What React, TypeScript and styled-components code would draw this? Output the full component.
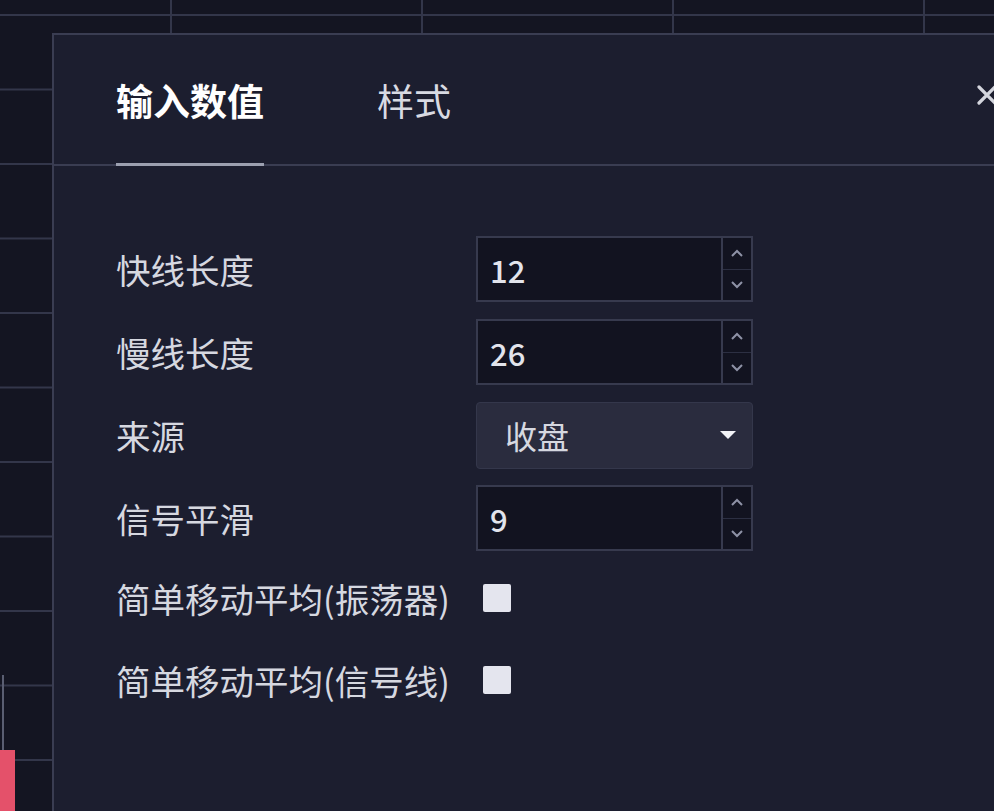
import React, { useState } from 'react';
import styled, { createGlobalStyle } from 'styled-components';

const GlobalStyle = createGlobalStyle`
  html, body {
    margin: 0;
    padding: 0;
    background: #141522;
  }
  * {
    box-sizing: border-box;
  }
`;

const FONT = `"Noto Sans CJK SC", "Noto Sans", sans-serif`;

function App() {
  const [activeTab, setActiveTab] = useState(0);
  const [oscSma, setOscSma] = useState(false);
  const [sigSma, setSigSma] = useState(false);

  return (
    <Page>
      <GlobalStyle />
      <CandleWick />
      <Candle />
      <Panel>
        <Header>
          <Tab active={activeTab === 0} onClick={() => setActiveTab(0)}>
            输入数值
          </Tab>
          <Tab active={activeTab === 1} onClick={() => setActiveTab(1)}>
            样式
          </Tab>
          <CloseButton aria-label="close">
            <svg width="26" height="26" viewBox="0 0 26 26">
              <path d="M5 5 L21 21 M21 5 L5 21" stroke="#d4d6de" strokeWidth="3.2" strokeLinecap="round" />
            </svg>
          </CloseButton>
        </Header>
        <Body>
          <FormGrid>
            <Label>快线长度</Label>
            <NumberField value="12" />
            <Label>慢线长度</Label>
            <NumberField value="26" />
            <Label>来源</Label>
            <Select>
              <span>收盘</span>
              <Caret />
            </Select>
            <Label>信号平滑</Label>
            <NumberField value="9" />
          </FormGrid>
          <CheckRow>
            <Label>简单移动平均(振荡器)</Label>
            <CheckBox checked={oscSma} onClick={() => setOscSma(!oscSma)} />
          </CheckRow>
          <CheckRow>
            <Label>简单移动平均(信号线)</Label>
            <CheckBox checked={sigSma} onClick={() => setSigSma(!sigSma)} />
          </CheckRow>
        </Body>
      </Panel>
    </Page>
  );
}

function NumberField({ value }: { value: string }) {
  return (
    <InputBox>
      <InputText>{value}</InputText>
      <Spinner>
        <SpinHalf>
          <svg width="14" height="9" viewBox="0 0 14 9">
            <path d="M2 7 L7 2 L12 7" stroke="#8e92a6" strokeWidth="2" fill="none" />
          </svg>
        </SpinHalf>
        <SpinHalf divider>
          <svg width="14" height="9" viewBox="0 0 14 9">
            <path d="M2 2 L7 7 L12 2" stroke="#8e92a6" strokeWidth="2" fill="none" />
          </svg>
        </SpinHalf>
      </Spinner>
    </InputBox>
  );
}

const Page = styled.div`
  position: relative;
  width: 994px;
  height: 811px;
  overflow: hidden;
  padding: 33px 0 0 52px;
  display: flex;
  background-color: #141522;
  background-image:
    linear-gradient(to bottom, #33364a 0, #33364a 2px, transparent 2px),
    linear-gradient(to right, #33364a 0, #33364a 2px, transparent 2px);
  background-size: 100% 74.5px, 251px 100%;
  background-position: 0 14px, 170px 0;
`;

const Candle = styled.div`
  position: absolute;
  left: 0;
  top: 750px;
  width: 15px;
  height: 61px;
  background: #e4516a;
`;

const CandleWick = styled.div`
  position: absolute;
  left: 2px;
  top: 675px;
  width: 2px;
  height: 76px;
  background: #5a5e72;
`;

const Panel = styled.div`
  flex: 0 0 962px;
  height: 800px;
  background: #1c1e2f;
  border-top: 2px solid #3a3d52;
  border-left: 2px solid #3a3d52;
  display: flex;
  flex-direction: column;
  font-family: ${FONT};
`;

const Header = styled.div`
  height: 131px;
  display: flex;
  align-items: stretch;
  padding-left: 62px;
  gap: 113px;
  border-bottom: 2px solid #3a3d52;
`;

const Tab = styled.div<{ active: boolean }>`
  display: flex;
  align-items: center;
  padding-top: 2px;
  font-size: 37px;
  font-weight: ${({ active }) => (active ? 700 : 400)};
  color: ${({ active }) => (active ? '#ffffff' : '#d8dae2')};
  border-bottom: 3px solid ${({ active }) => (active ? '#9ca0b0' : 'transparent')};
  margin-bottom: -2px;
  cursor: pointer;
`;

const CloseButton = styled.div`
  margin-left: auto;
  margin-right: 14px;
  display: flex;
  align-items: center;
  padding-bottom: 10px;
`;

const Body = styled.div`
  padding: 70px 0 0 62px;
  display: flex;
  flex-direction: column;
`;

const FormGrid = styled.div`
  display: grid;
  grid-template-columns: 360px 277px;
  grid-auto-rows: 66px;
  row-gap: 17px;
  align-items: center;
`;

const Label = styled.div`
  font-size: 34.5px;
  color: #d6d8e0;
  line-height: 1;
  white-space: nowrap;
`;

const InputBox = styled.div`
  height: 66px;
  display: flex;
  background: #121320;
  border: 2px solid #373a4e;
`;

const InputText = styled.div`
  flex: 1;
  display: flex;
  align-items: center;
  padding-left: 12px;
  font-size: 31px;
  font-weight: 500;
  color: #e2e4ec;
`;

const Spinner = styled.div`
  width: 30px;
  display: flex;
  flex-direction: column;
  border-left: 2px solid #373a4e;
`;

const SpinHalf = styled.div<{ divider?: boolean }>`
  flex: 1;
  display: flex;
  align-items: center;
  justify-content: center;
  border-top: ${({ divider }) => (divider ? '1px solid #2c2f42' : 'none')};
`;

const Select = styled.div`
  height: 67px;
  display: flex;
  align-items: center;
  justify-content: space-between;
  padding: 0 16px 0 28px;
  background: #2a2c3e;
  border: 1px solid #34374b;
  border-radius: 4px;
  font-size: 32px;
  color: #d6d8e0;
`;

const Caret = styled.div`
  width: 0;
  height: 0;
  border-left: 8px solid transparent;
  border-right: 8px solid transparent;
  border-top: 8px solid #f2f3f7;
`;

const CheckRow = styled.div`
  display: flex;
  align-items: center;
  gap: 33px;
  height: 82px;
  margin-top: 6px;
  & + & {
    margin-top: 0;
  }
`;

const CheckBox = styled.div<{ checked: boolean }>`
  width: 28px;
  height: 28px;
  border-radius: 2px;
  background: ${({ checked }) => (checked ? '#4b7bec' : '#e4e5ee')};
  cursor: pointer;
`;

export default App;
